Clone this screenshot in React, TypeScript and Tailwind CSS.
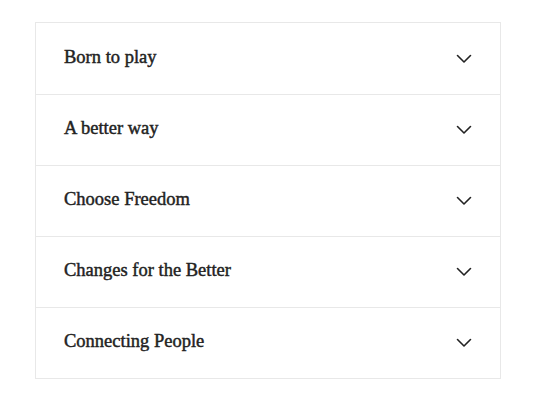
const items = [
  "Born to play",
  "A better way",
  "Choose Freedom",
  "Changes for the Better",
  "Connecting People",
];

function Chevron() {
  return (
    <svg width="16" height="10" viewBox="0 0 16 10" fill="none" className="text-[#222]">
      <path d="M1.5 1.5 L8 8 L14.5 1.5" stroke="currentColor" strokeWidth="1.6" strokeLinecap="round" strokeLinejoin="round" />
    </svg>
  );
}

export default function App() {
  return (
    <div className="min-h-[400px] w-[533px] bg-white pl-[35px] pt-[22px]">
      <div className="w-[466px] border border-[#e8e8e8]">
        {items.map((label, i) => (
          <div
            key={label}
            className={`flex h-[71px] items-center justify-between pl-[28px] pr-[28px] ${i > 0 ? "border-t border-[#e8e8e8]" : ""}`}
          >
            <span className="-mt-[2px] font-['Liberation_Serif',serif] text-[18.5px] text-[#222] [-webkit-text-stroke:0.45px_#222]">
              {label}
            </span>
            <Chevron />
          </div>
        ))}
      </div>
    </div>
  );
}
